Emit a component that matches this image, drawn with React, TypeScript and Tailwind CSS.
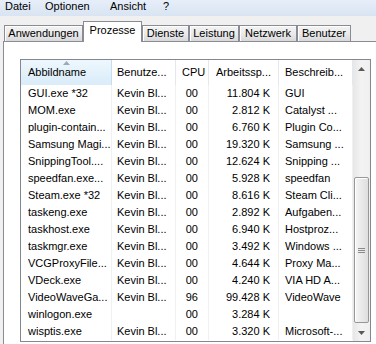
import React from 'react';

interface Proc {
  name: string;
  user: string;
  cpu: string;
  mem: string;
  desc: string;
}

const procs: Proc[] = [
  { name: 'GUI.exe *32', user: 'Kevin Bl...', cpu: '00', mem: '11.804 K', desc: 'GUI' },
  { name: 'MOM.exe', user: 'Kevin Bl...', cpu: '00', mem: '2.812 K', desc: 'Catalyst ...' },
  { name: 'plugin-contain...', user: 'Kevin Bl...', cpu: '00', mem: '6.760 K', desc: 'Plugin Co...' },
  { name: 'Samsung Magi...', user: 'Kevin Bl...', cpu: '00', mem: '19.320 K', desc: 'Samsung ...' },
  { name: 'SnippingTool....', user: 'Kevin Bl...', cpu: '00', mem: '12.624 K', desc: 'Snipping ...' },
  { name: 'speedfan.exe...', user: 'Kevin Bl...', cpu: '00', mem: '5.928 K', desc: 'speedfan' },
  { name: 'Steam.exe *32', user: 'Kevin Bl...', cpu: '00', mem: '8.616 K', desc: 'Steam Cli...' },
  { name: 'taskeng.exe', user: 'Kevin Bl...', cpu: '00', mem: '2.892 K', desc: 'Aufgaben...' },
  { name: 'taskhost.exe', user: 'Kevin Bl...', cpu: '00', mem: '6.940 K', desc: 'Hostproz...' },
  { name: 'taskmgr.exe', user: 'Kevin Bl...', cpu: '00', mem: '3.492 K', desc: 'Windows ...' },
  { name: 'VCGProxyFile...', user: 'Kevin Bl...', cpu: '00', mem: '4.644 K', desc: 'Proxy Ma...' },
  { name: 'VDeck.exe', user: 'Kevin Bl...', cpu: '00', mem: '4.240 K', desc: 'VIA HD A...' },
  { name: 'VideoWaveGa...', user: 'Kevin Bl...', cpu: '96', mem: '99.428 K', desc: 'VideoWave' },
  { name: 'winlogon.exe', user: '', cpu: '00', mem: '3.284 K', desc: '' },
  { name: 'wisptis.exe', user: 'Kevin Bl...', cpu: '00', mem: '3.320 K', desc: 'Microsoft-...' },
];

const tabs = [
  { label: 'Anwendungen', w: 'w-[79px]' },
  { label: 'Prozesse', w: 'w-[59px]', active: true },
  { label: 'Dienste', w: 'w-[47px]' },
  { label: 'Leistung', w: 'w-[50px]' },
  { label: 'Netzwerk', w: 'w-[58px]' },
  { label: 'Benutzer', w: 'w-[54px]' },
];

const Arrow = ({ down }: { down?: boolean }) => (
  <svg width="7" height="4" viewBox="0 0 7 4">
    {down ? <path d="M0 0h7L3.5 4z" fill="#5a5a5a" /> : <path d="M0 4h7L3.5 0z" fill="#5a5a5a" />}
  </svg>
);

const App: React.FC = () => {
  return (
    <div className="w-[376px] h-[344px] overflow-hidden bg-[#f0f0f0] flex flex-col font-['Liberation_Sans',Arial,sans-serif] text-[11px] text-black">
      {/* menu bar */}
      <div className="h-[16px] flex items-start pl-[5px] bg-gradient-to-b from-[#e6eef9] to-[#d9e4f2] leading-[13px]">
        <span className="w-[40px]">Datei</span>
        <span className="w-[65px]">Optionen</span>
        <span className="w-[53px]">Ansicht</span>
        <span>?</span>
      </div>

      {/* tabs */}
      <div className="h-[20px] mt-[5px] flex items-end pl-[4px]">
        {tabs.map((t) =>
          t.active ? (
            <div
              key={t.label}
              className={`${t.w} h-[21px] -mb-px relative z-10 bg-white border border-b-0 border-[#898c95] flex justify-center pt-[2px] leading-[13px]`}
            >
              {t.label}
            </div>
          ) : (
            <div
              key={t.label}
              className={`${t.w} h-[16px] bg-gradient-to-b from-[#f3f3f3] via-[#ebebeb] to-[#d8d8d8] border border-b-0 border-[#898c95] shadow-[inset_1px_1px_0_#ffffff] flex justify-center pt-[1px] leading-[13px]`}
            >
              {t.label}
            </div>
          )
        )}
      </div>

      {/* panel */}
      <div className="flex-1 ml-[3px] bg-white border-l border-t border-[#898c95] pt-[17px] pl-[16px]">
        <div className="w-[351px] h-[283px] border border-[#828790] flex">
          <div className="w-[332px] flex flex-col">
            {/* header */}
            <div className="h-[25px] flex">
              <div className="w-[91px] relative bg-gradient-to-b from-[#eef7fd] to-[#d9ecf9] border-r border-[#c4def1] pl-[7px] flex items-center">
                <svg className="absolute left-[42px] top-[1px]" width="7" height="4" viewBox="0 0 7 4">
                  <path d="M0 4h7L3.5 0z" fill="#9aaabb" />
                </svg>
                Abbildname
              </div>
              <div className="w-[64px] border-r border-[#e3e8ee] pl-[5px] flex items-center">Benutze...</div>
              <div className="w-[33px] border-r border-[#e3e8ee] pl-[6px] flex items-center">CPU</div>
              <div className="w-[70px] border-r border-[#e3e8ee] pl-[7px] flex items-center">Arbeitssp...</div>
              <div className="w-[74px] border-r border-[#e3e8ee] pl-[6px] flex items-center">Beschreib...</div>
            </div>
            {/* rows */}
            {procs.map((p) => (
              <div key={p.name} className="h-[17px] flex leading-[17px] whitespace-nowrap">
                <div className="w-[91px] border-r border-[#f0f0f0] pl-[7px] overflow-hidden">{p.name}</div>
                <div className="w-[64px] border-r border-[#f0f0f0] pl-[5px] overflow-hidden">{p.user}</div>
                <div className="w-[33px] border-r border-[#f0f0f0] pr-[10px] text-right">{p.cpu}</div>
                <div className="w-[70px] border-r border-[#f0f0f0] pr-[8px] text-right">{p.mem}</div>
                <div className="w-[74px] border-r border-[#f0f0f0] pl-[6px] overflow-hidden">{p.desc}</div>
              </div>
            ))}
          </div>

          {/* scrollbar */}
          <div className="w-[17px] flex flex-col bg-gradient-to-r from-[#e7e7e7] via-[#f3f3f3] to-[#efefef]">
            <div className="h-[17px] flex items-center justify-center">
              <Arrow />
            </div>
            <div className="flex-1 pt-[100px]">
              <div className="h-[146px] mx-[1px] rounded-[2px] border border-[#979797] bg-gradient-to-r from-[#f5f5f5] to-[#dedede] shadow-[inset_1px_1px_0_#ffffff] flex flex-col items-center justify-center gap-[1px]">
                <div className="w-[7px] h-px bg-[#8a8a8a]" />
                <div className="w-[7px] h-px bg-[#8a8a8a]" />
                <div className="w-[7px] h-px bg-[#8a8a8a]" />
              </div>
            </div>
            <div className="h-[17px] flex items-center justify-center">
              <Arrow down />
            </div>
          </div>
        </div>
      </div>
    </div>
  );
};

export default App;
